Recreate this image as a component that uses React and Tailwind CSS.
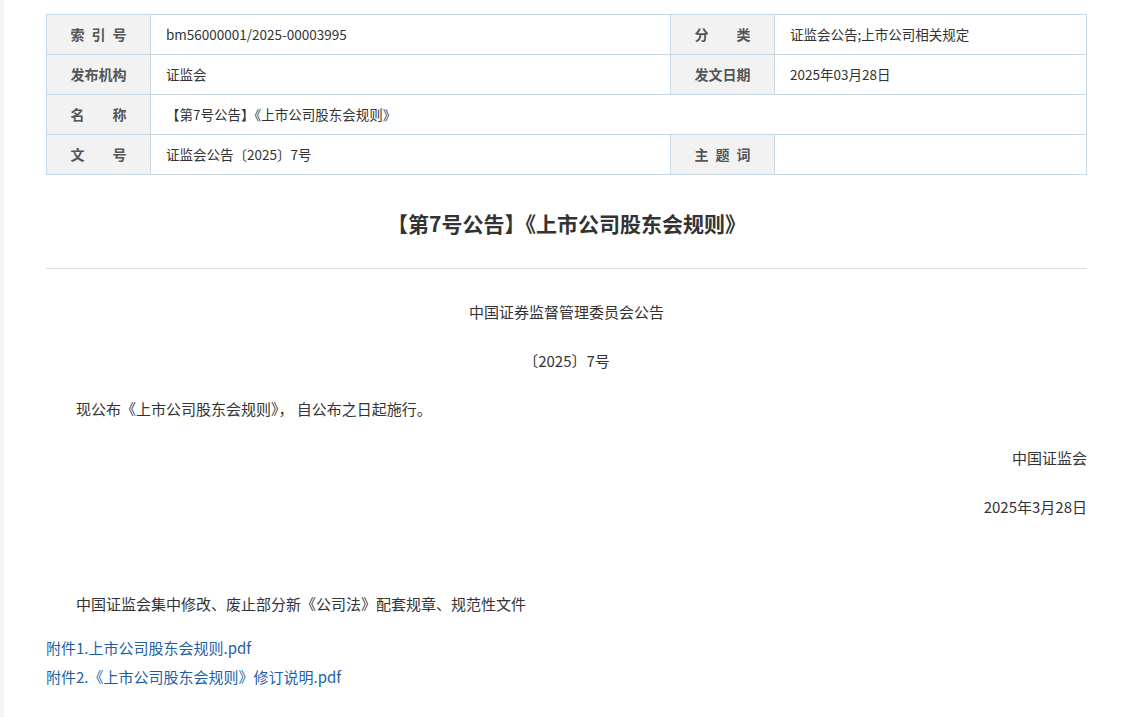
const FONT = { fontFamily: '"Microsoft YaHei", "Noto Sans CJK SC", "Noto Sans", sans-serif' };

function Label({ children, wide }) {
  return (
    <td className="w-[104px] h-[40px] border border-[#c9d6e3] bg-[#f2f2f2] text-center text-[14px] font-bold text-[#555] whitespace-pre">
      <span className={wide ? "tracking-[7px] pl-[7px]" : ""}>{children}</span>
    </td>
  );
}

function Value({ children, colSpan }) {
  return (
    <td
      colSpan={colSpan}
      className="h-[40px] border border-[#c9d6e3] bg-white px-[15px] text-[13.5px] text-[#333]"
    >
      {children}
    </td>
  );
}

export default function App() {
  return (
    <div className="flex min-h-[717px] bg-white" style={FONT}>
      <div className="w-[4px] shrink-0 bg-[#f5f5f5]" />
      <div className="ml-[42px] w-[1041px] pt-[14px] pb-8 text-[#333]">
        {/* info table */}
        <table className="w-full border-collapse table-fixed">
          <colgroup>
            <col className="w-[104px]" />
            <col className="w-[520px]" />
            <col className="w-[104px]" />
            <col />
          </colgroup>
          <tbody>
            <tr>
              <Label wide>索引号</Label>
              <Value>bm56000001/2025-00003995</Value>
              <Label>{"分　　类"}</Label>
              <Value>证监会公告;上市公司相关规定</Value>
            </tr>
            <tr>
              <Label>发布机构</Label>
              <Value>证监会</Value>
              <Label>发文日期</Label>
              <Value>2025年03月28日</Value>
            </tr>
            <tr>
              <Label>{"名　　称"}</Label>
              <Value colSpan={3}>【第7号公告】《上市公司股东会规则》</Value>
            </tr>
            <tr>
              <Label>{"文　　号"}</Label>
              <Value>证监会公告〔2025〕7号</Value>
              <Label wide>主题词</Label>
              <Value />
            </tr>
          </tbody>
        </table>

        {/* title */}
        <h1 className="mt-[33px] text-center text-[21px] font-bold leading-[30px] text-[#333]">
          【第7号公告】《上市公司股东会规则》
        </h1>
        <div className="mt-[30px] h-px bg-[#dddddd]" />

        {/* body */}
        <div className="mt-[31px] text-[15px] leading-[24px]">
          <p className="text-center">中国证券监督管理委员会公告</p>
          <p className="mt-[25px] text-center">〔2025〕7号</p>
          <p className="mt-[24px] indent-[30px]">现公布《上市公司股东会规则》， 自公布之日起施行。</p>
          <p className="mt-[25px] text-right">中国证监会</p>
          <p className="mt-[25px] text-right">2025年3月28日</p>
          <p className="mt-[73px] indent-[30px]">中国证监会集中修改、废止部分新《公司法》配套规章、规范性文件</p>
        </div>

        {/* attachments */}
        <div className="mt-[20px] flex flex-col text-[15px] leading-[24px] text-[#1c5fa8]">
          <a href="#" className="hover:underline">附件1.上市公司股东会规则.pdf</a>
          <a href="#" className="mt-[5px] hover:underline">附件2.《上市公司股东会规则》修订说明.pdf</a>
        </div>
      </div>
    </div>
  );
}
